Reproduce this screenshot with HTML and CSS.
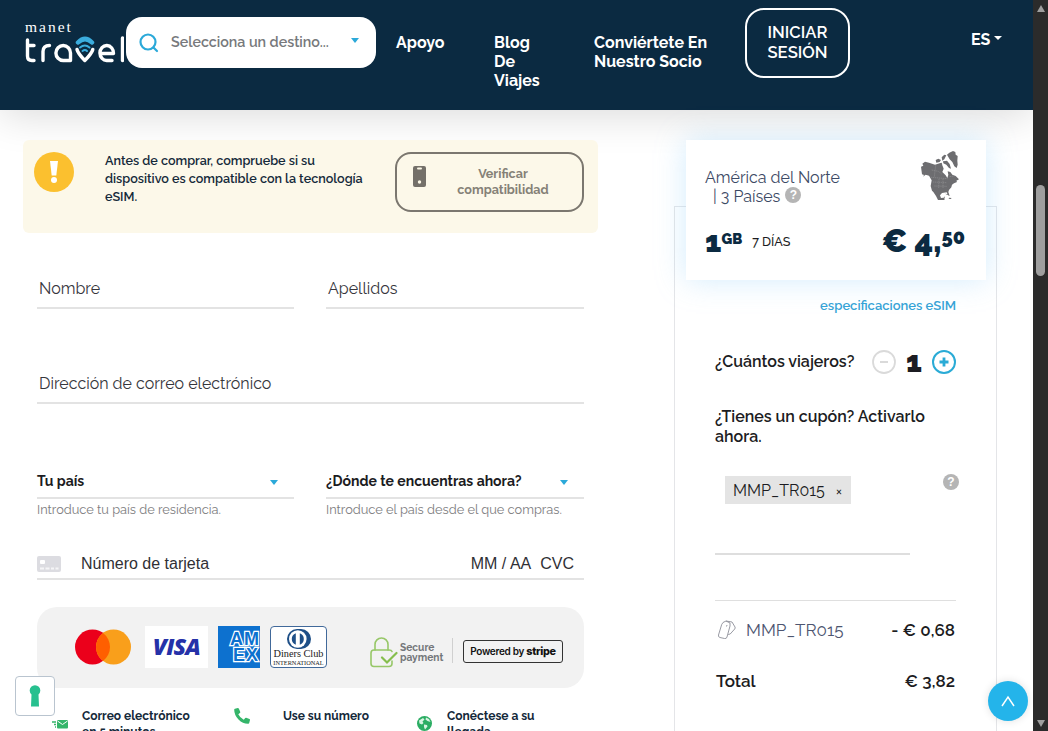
FILE: index.html
```html
<!DOCTYPE html>
<html lang="es">
     <head>
          <meta charset="UTF-8" />
          <meta
               name="viewport"
               content="width=device-width, initial-scale=1.0" />
          <title>Manet Travel</title>
          <link rel="stylesheet" href="styles.css">
     </head>
     <body>
          <div class="page">
               <header>
                    <a class="logo" href="#">
                         <span class="logo-top">manet</span>
                         <svg width="99" height="30" viewBox="0 0 99 30" fill="none" stroke="#fff" stroke-width="3.4" stroke-linecap="round" stroke-linejoin="round">
                              <path d="M2.5 5v16q0 4.500 4.500 4.500h2M2.500 10.500h6.500" />
                              <path d="M18 25.500v-9q0-6 6.500-6" />
                              <path d="M45.500 18a7.300 7.500 0 1 0-7.300 7.500h7.300z" />
                              <path d="M52 14.500q1 4 7.800 11q7-7 8-11" />
                              <path d="M76 18.500h12.500a6.800 7.500 0 1 0-6.500 7h5" />
                              <path d="M97.500 3v22.500" />
                              <g stroke="#3badde">
                                   <path d="M53 7.500q7-7 14 0" stroke-width="4.500" />
                                   <path d="M55 12.500q5-4 9.500 0M57.500 16q2.500-2 4.500 0" stroke-width="2" />
                              </g>
                         </svg>
                    </a>
                    <div class="search">
                         <svg width="20" height="20" viewBox="0 0 20 20" fill="none" stroke="#2ba9d9" stroke-width="2.200" stroke-linecap="round">
                              <circle cx="9" cy="9" r="7.500" />
                              <path d="M14.500 14.500l3.500 3.500" />
                         </svg>
                         <span>Selecciona un destino...</span>
                         <i class="caret"></i>
                    </div>
                    <nav>
                         <a class="nav-support" href="#">Apoyo</a>
                         <a class="nav-blog" href="#">Blog De Viajes</a>
                         <a class="nav-partner" href="#">Conviértete En Nuestro Socio</a>
                    </nav>
                    <a class="login" href="#">INICIAR SESIÓN</a>
                    <a class="lang" href="#">ES <i></i></a>
               </header>

               <main>
                    <section class="checkout">
                         <div class="alert">
                              <div class="alert-icon">
                                   <svg width="10" height="24" viewBox="0 0 10 24" fill="#fff">
                                        <path d="M1 1h8l-1.700 14.500h-4.600z" />
                                        <circle cx="5" cy="20" r="3" />
                                   </svg>
                              </div>
                              <p>Antes de comprar, compruebe si su dispositivo es compatible con la tecnología eSIM.</p>
                              <a class="verify" href="#">
                                   <svg width="13" height="21" viewBox="0 0 13 21">
                                        <rect width="13" height="21" rx="2" fill="#747069" />
                                        <rect x="4" y="1.500" width="5" height="2" rx="1" fill="#fcf8e8" />
                                        <circle cx="6.500" cy="16" r="1.700" fill="#fcf8e8" />
                                   </svg>
                                   <span>Verificar compatibilidad</span>
                              </a>
                         </div>

                         <form>
                              <div class="row names">
                                   <div class="field">Nombre</div>
                                   <div class="field">Apellidos</div>
                              </div>
                              <div class="field email">Dirección de correo electrónico</div>
                              <div class="row countries">
                                   <div>
                                        <div class="select">Tu país <i class="caret"></i></div>
                                        <small>Introduce tu país de residencia.</small>
                                   </div>
                                   <div>
                                        <div class="select">¿Dónde te encuentras ahora? <i class="caret"></i></div>
                                        <small>Introduce el país desde el que compras.</small>
                                   </div>
                              </div>
                              <div class="card-number">
                                   <svg width="24" height="16" viewBox="0 0 24 16">
                                        <rect width="24" height="16" rx="2" fill="#dcdce1" />
                                        <rect x="3" y="4" width="5" height="4" rx="1" fill="#fff" />
                                        <path d="M3 12.500h4M8.500 12.500h4M14 12.500h3M18.500 12.500h3" stroke="#f5f5f7" stroke-width="2" />
                                   </svg>
                                   <span class="number">Número de tarjeta</span>
                                   <span>MM / AA</span>
                                   <span class="cvc">CVC</span>
                              </div>
                         </form>

                         <div class="payments">
                              <svg class="mastercard" width="56" height="36" viewBox="0 0 56 36">
                                   <circle cx="17.500" cy="18" r="17.500" fill="#eb001b" />
                                   <circle cx="38.500" cy="18" r="17.500" fill="#f99f1b" />
                                   <path d="M28 4a17.500 17.500 0 0 1 0 28a17.500 17.500 0 0 1 0-28z" fill="#ff5f00" />
                              </svg>
                              <div class="visa">VISA</div>
                              <div class="amex"><span>AM</span><span>EX</span></div>
                              <div class="diners">
                                   <svg width="24" height="20" viewBox="0 0 24 20">
                                        <path d="M10 0h4a10 10 0 0 1 0 20h-4a10 10 0 0 1 0-20z" fill="#1e4f87" />
                                        <circle cx="10.800" cy="10" r="8.800" fill="#fff" />
                                        <path d="M8.800 4.200v11.600a6.200 6.200 0 0 1 0-11.600zM12.800 4.200v11.600a6.200 6.200 0 0 0 0-11.600z" fill="#1e4f87" />
                                   </svg>
                                   <span class="diners-name">Diners Club</span>
                                   <span class="diners-sub">INTERNATIONAL</span>
                              </div>
                              <div class="secure">
                                   <svg width="28" height="31" viewBox="0 0 28 31" fill="none" stroke="#97c768" stroke-width="1.600" stroke-linecap="round">
                                        <path d="M5 13v-5.500a6.500 6.500 0 0 1 13 0v5.500" />
                                        <path d="M22 24v2.500q0 3-3 3h-15q-3 0-3-3v-10.500q0-3 3-3h15q2.500 0 3 1.500" />
                                        <path d="M12 20.500l5 5l9.500-9.500" stroke-width="2.200" stroke="#85be4d" />
                                   </svg>
                                   <div>
                                        <span>Secure</span>
                                        <span>payment</span>
                                   </div>
                              </div>
                              <div class="stripe">Powered by <b>stripe</b></div>
                         </div>

                         <div class="features">
                              <div class="feature mail">
                                   <svg width="16" height="10" viewBox="0 0 16 10">
                                        <rect x="5" y="1" width="11" height="8.500" rx="1" fill="#35b56a" />
                                        <path d="M5.500 2l5 3.500l5-3.500" fill="none" stroke="#fff" />
                                        <path d="M0 3h4M2 5.500h2M3 8h1" stroke="#35b56a" stroke-width="1.400" />
                                   </svg>
                                   <span>Correo electrónico en 5 minutos</span>
                              </div>
                              <div class="feature phone">
                                   <svg width="16" height="16" viewBox="0 0 16 16" fill="#35b56a">
                                        <path d="M1 .7L3.800 0q.7 0 1 .6l1.400 3.200q.2.600-.3 1.100L4.300 6.200Q6 9.800 9.800 11.700l1.400-1.700q.500-.5 1-.3l3.300 1.400q.6.300.5 1l-.8 3q-.2.700-.9.700Q9 16 4.500 11.500Q.2 7 .2 1.700q0-.8.800-1z" />
                                   </svg>
                                   <span>Use su número</span>
                              </div>
                              <div class="feature globe">
                                   <svg width="15" height="15" viewBox="0 0 15 15">
                                        <circle cx="7.500" cy="7.500" r="7.500" fill="#2bad63" />
                                        <path d="M2 4.500l4-2.500l1.500 1.500l-2 2l1 1.500l-1.500 1.500l-2.500-1zM9 1.500l3 1.500l1.500 3l-3-1l-2-1.500zM7 8.500l3 .5l.5 1.500l-2.500 3l-1-2.500z" fill="#d8f3e2" />
                                   </svg>
                                   <span>Conéctese a su llegada</span>
                              </div>
                         </div>
                    </section>

                    <aside>
                         <div class="plan">
                              <div class="plan-head">
                                   <div class="plan-name">América del Norte<br><span>| 3 Países <b class="help">?</b></span></div>
                                   <svg width="38" height="50" viewBox="0 0 114 150" fill="#6d6d70">
                                        <path d="M0 50l7-3l-3-6l8-6l12 3l18 6l14-4l8 6l4 10l-4 10l10 10l5 8l3-10l-2-10l8 2l6 8l10 4l10 10l-8 4l2 4l-9 4l-6 4l-2 8l-7 8l-2 6l4 12l-5-2l-4-9l-14 2l-6 7l3 8l8-1l4-4l-2 9l4 7l8 4l-3 4l-12-6l-16-7l-6-12l-8-12l-4-4l-4-14l3-17l-8-14l-10-3l-8 6l3-5l-6-2z" />
                                        <path d="M78 14l7-6l11-5l7 3l1 8l6 4l-1 14l1 12l-3 10l-7-5l-6-13l-8-8z" />
                                        <path d="M44 30l8-4l8 4l-4 6l-10 2zM62 22l8-8l6 2l-6 12l-6 4zM66 34l12-2l8 10l4 14l-6-2l-8-10l-9-4zM56 40l6-2l2 6l-6 2zM84 143l8 1l-3 3l-6-1zM72 131l10 2l-2 2z" />
                                        <path d="M32 60l20 4l10 8M30 82l50 4M44 46l-4 34M54 86l-1 30M66 86v28M36 96l40 2M40 108l38 1M86 80l14-2" fill="none" stroke="#98989b" stroke-width="1.500" stroke-dasharray="4 2" />
                                   </svg>
                              </div>
                              <div class="plan-price">
                                   <div class="data">1<sup>GB</sup></div>
                                   <div class="days">7 DÍAS</div>
                                   <div class="price">€ 4,<sup>50</sup></div>
                              </div>
                         </div>

                         <a class="specs" href="#">especificaciones eSIM</a>

                         <div class="travellers">
                              <span>¿Cuántos viajeros?</span>
                              <svg width="24" height="24" viewBox="0 0 24 24" fill="none" stroke="#dadada">
                                   <circle cx="12" cy="12" r="11" stroke-width="1.800" />
                                   <path d="M8 12h8" stroke-width="2" />
                              </svg>
                              <b>1</b>
                              <svg width="24" height="24" viewBox="0 0 24 24" fill="none" stroke="#2aabd6">
                                   <circle cx="12" cy="12" r="11" stroke-width="2" />
                                   <path d="M7.500 12h9M12 7.500v9" stroke-width="2.800" />
                              </svg>
                         </div>

                         <p class="coupon-title">¿Tienes un cupón? Activarlo ahora.</p>
                         <div class="coupon">
                              <div class="tag">MMP_TR015 <i>×</i></div>
                              <b class="help">?</b>
                         </div>

                         <div class="totals">
                              <div class="line discount">
                                   <svg width="20" height="20" viewBox="0 0 20 20" fill="none" stroke="#8d8f99" stroke-width=".9">
                                        <path d="M6 2.500l3-1.500l4 2v3l-3 11q-.5 2-2.500 1.500l-4.500-1q-2-.5-1.500-2.500l3.200-10.500z" />
                                        <path d="M9 1l6 1l3 5q.5 1-.3 2l-4.500 5l-2 .5M10 5l-.5 1.500" />
                                   </svg>
                                   <span>MMP_TR015</span>
                                   <b>- € 0,68</b>
                              </div>
                              <div class="line total"><span>Total</span><b>€ 3,82</b></div>
                         </div>
                    </aside>
               </main>
          </div>

          <div class="scrollbar">
               <i class="arrow-up"></i>
               <i class="thumb"></i>
               <i class="arrow-down"></i>
          </div>

          <a class="privacy" href="#">
               <svg width="12" height="22" viewBox="0 0 12 22" fill="#27c08f">
                    <path d="M2.500 9.500a5.300 5.300 0 1 1 7 0l.5 12h-8z" />
               </svg>
          </a>
          <a class="to-top" href="#">
               <svg width="14" height="12" viewBox="0 0 14 12" fill="none" stroke="#fff" stroke-width="1.500">
                    <path d="M1 11l6-9l6 9" />
               </svg>
          </a>
     </body>
</html>
```
FILE: styles.css
```css
* {
     padding: 0;
     margin: 0;
     box-sizing: border-box;
}
body {
     display: flex;
     height: 731px;
     overflow: hidden;
     background-color: #fff;
     font-family: Raleway, Lato, sans-serif;
     color: #1c1c22;
}
a {
     text-decoration: none;
     color: inherit;
}
svg {
     display: block;
     flex: none;
}
.page {
     width: 1033px;
     height: 731px;
     overflow: hidden;
}

/* header */
header {
     display: flex;
     align-items: flex-start;
     height: 110px;
     padding-left: 25px;
     background-color: #0b2a41;
     color: #fff;
     box-shadow: 0 5px 40px rgba(0, 0, 0, 0.15);
}
.logo {
     width: 101px;
     padding-top: 19px;
}
.logo-top {
     display: block;
     font: 15.5px/16px "Liberation Serif", serif;
     letter-spacing: 2px;
}
.search {
     display: flex;
     align-items: center;
     width: 250px;
     height: 51px;
     margin-top: 17px;
     padding: 0 17px 0 13px;
     background-color: #fff;
     border-radius: 16px;
     color: #77797c;
     font-size: 14.25px;
     font-weight: 600;
}
.search span {
     flex: 1;
     margin-left: 12px;
     padding-bottom: 2px;
}
.caret {
     border: 4.5px solid transparent;
     border-top: 5px solid #2ba9d9;
     border-bottom: 0;
}
.search .caret {
     margin-bottom: 4px;
}
nav {
     display: flex;
     padding: 33px 0 0 20px;
     font-size: 16px;
     font-weight: 700;
     line-height: 19px;
}
.nav-support {
     width: 98px;
}
.nav-blog {
     width: 50px;
     margin-right: 50px;
}
.nav-partner {
     width: 120px;
}
.login {
     width: 105px;
     height: 70px;
     margin: 8px 0 0 31px;
     padding: 12px 16px 0;
     border: 2px solid #fff;
     border-radius: 19px;
     font-size: 16.6px;
     font-weight: 600;
     line-height: 20px;
     text-align: center;
}
.lang {
     display: flex;
     align-items: center;
     margin: 30px 0 0 121px;
     font-size: 16px;
     font-weight: 700;
     line-height: 20px;
}
.lang i {
     margin: -4px 0 0 4px;
     border: 4px solid transparent;
     border-top-color: #fff;
     border-bottom: 0;
}

main {
     display: flex;
     justify-content: space-between;
     padding: 30px 36px 0 23px;
}
.checkout {
     width: 575px;
}

/* compatibility notice */
.alert {
     display: flex;
     align-items: flex-start;
     height: 93px;
     padding: 12px 14px 0 11px;
     background-color: #fcf8e9;
     border-radius: 6px;
     font-size: 12.6px;
     font-weight: 700;
}
.alert-icon {
     display: flex;
     flex: none;
     align-items: center;
     justify-content: center;
     width: 40px;
     height: 40px;
     background-color: #fbc02f;
     border-radius: 50%;
}
.alert p {
     flex: 1;
     margin: 0 20px 0 31px;
     color: #14293a;
     font-weight: 600;
     line-height: 18px;
}
.verify {
     display: flex;
     flex: none;
     width: 189px;
     height: 60px;
     padding: 12px 0 0 16px;
     border: 2px solid #7b776f;
     border-radius: 16px;
     color: #858177;
     line-height: 16px;
     text-align: center;
}
.verify span {
     width: 100px;
     margin-left: 27px;
}

/* form */
form {
     width: 547px;
     margin-left: 14px;
}
.row {
     display: grid;
     grid-template-columns: 257px 258px;
     justify-content: space-between;
}
.field {
     height: 34px;
     padding: 4px 2px 0;
     border-bottom: 2px solid #e3e3e3;
     color: #36363c;
     font-size: 16px;
     line-height: 20px;
}
.names {
     padding-top: 42px;
}
.email {
     margin-top: 61px;
}
.countries {
     padding-top: 66px;
}
.select {
     display: flex;
     align-items: center;
     justify-content: space-between;
     height: 29px;
     padding: 0 16px 5px 0;
     border-bottom: 2px solid #e3e3e3;
     font-size: 14px;
     font-weight: 700;
     line-height: 18px;
}
.select .caret {
     margin-top: 3px;
}
small {
     display: block;
     padding-top: 3px;
     color: #7d7d80;
     font-size: 12.8px;
     line-height: 16px;
}
.card-number {
     display: flex;
     align-items: center;
     height: 31px;
     margin-top: 31px;
     border-bottom: 2px solid #e3e3e3;
     padding-right: 10px;
     color: #303035;
     font: 16px "Liberation Sans", Arial, sans-serif;
}
.number {
     flex: 1;
     margin-left: 20px;
}
.cvc {
     margin-left: 9px;
}

/* payment logos */
.payments {
     display: flex;
     align-items: center;
     width: 547px;
     height: 81px;
     margin: 27px 0 0 14px;
     padding: 0 0 2px 38px;
     background-color: #f2f2f2;
     border-radius: 20px;
}
.visa {
     width: 63px;
     height: 42px;
     margin-left: 14px;
     background-color: #fff;
     color: #2531a8;
     font: italic 800 23px/40px "Open Sans", sans-serif;
     letter-spacing: -0.8px;
     text-align: center;
}
.amex {
     width: 42px;
     height: 42px;
     margin-left: 10px;
     padding: 5px 0 0 12px;
     overflow: hidden;
     background-color: #0d71cf;
     color: #0d71cf;
     font: 700 18px/16px "Liberation Sans", sans-serif;
     letter-spacing: 1px;
     -webkit-text-stroke: 2.4px #fff;
     paint-order: stroke fill;
}
.amex span {
     display: block;
}
.amex span + span {
     padding-left: 3px;
}
.diners {
     display: flex;
     flex-direction: column;
     align-items: center;
     width: 57px;
     height: 42px;
     margin-left: 10px;
     padding-top: 2px;
     background-color: #fff;
     border: 1px solid #41699a;
     border-radius: 4px;
     color: #222;
     font-family: "Liberation Serif", serif;
     white-space: nowrap;
}
.diners-name {
     font-size: 10.3px;
     line-height: 10px;
}
.diners-sub {
     font-size: 6.3px;
     line-height: 7px;
}
.secure {
     display: flex;
     margin: 11px 0 0 43px;
     color: #74777a;
     font-size: 10.2px;
     font-weight: 700;
     line-height: 10px;
}
.secure div {
     width: 53px;
     height: 25px;
     margin: 1px 0 0 2px;
     padding-top: 4px;
     border-right: 1px solid #d0d0d0;
}
.secure span {
     display: block;
}
.stripe {
     width: 100px;
     height: 23px;
     margin: 10px 0 0 10px;
     border: 1px solid #333;
     border-radius: 3px;
     color: #111;
     font: 600 10px/21px Inter, sans-serif;
     letter-spacing: -0.3px;
     text-align: center;
     white-space: nowrap;
}
.stripe b {
     font-size: 10.8px;
     font-weight: 800;
}

.features {
     display: flex;
     margin-top: 20px;
     color: #14293a;
     font-size: 12px;
     font-weight: 700;
     line-height: 16px;
}
.feature {
     display: flex;
     align-items: flex-start;
}
.mail {
     width: 180px;
     padding-left: 29px;
}
.mail svg {
     margin: 11px 14px 0 0;
}
.phone {
     width: 207px;
     padding-left: 31px;
}
.phone svg {
     margin: 0 33px 0 0;
}
.globe {
     width: 140px;
     padding-left: 7px;
}
.globe svg {
     margin: 8px 15px 0 0;
}

/* order summary */
aside {
     width: 323px;
     height: 700px;
     margin-top: 66px;
     border: 1px solid #e4e5e8;
}
.plan {
     width: 300px;
     height: 140px;
     margin: -67px 0 0 11px;
     padding: 10px 20px 0 19px;
     background-color: #fff;
     box-shadow: 0 0 28px rgba(140, 205, 250, 0.38);
}
.plan-head {
     display: flex;
     justify-content: space-between;
     height: 73px;
     padding-right: 7px;
}
.plan-name {
     padding-top: 18px;
     color: #3c4964;
     font-size: 16px;
     line-height: 19px;
     white-space: nowrap;
}
.plan-name span {
     display: flex;
     align-items: center;
     margin-left: 8px;
}
.help {
     display: flex;
     align-items: center;
     justify-content: center;
     width: 16px;
     height: 16px;
     background-color: #b5b5b5;
     border-radius: 50%;
     color: #fff;
     font: 700 12px "Liberation Sans", sans-serif;
}
.plan-name .help {
     margin: -3px 0 0 5px;
}
.plan-price {
     display: flex;
     align-items: baseline;
     height: 40px;
     color: #0b2a41;
     line-height: 36px;
}
.plan-price sup {
     vertical-align: 8px;
     line-height: 1;
}
.data {
     font-size: 30px;
     font-weight: 900;
}
.data sup {
     font-size: 14.5px;
}
.days {
     flex: 1;
     align-self: flex-start;
     margin-left: 10px;
     padding-top: 1px;
     color: #1c1c22;
     font-size: 12.6px;
     font-weight: 500;
}
.price {
     margin-right: 1px;
     font-size: 32px;
     font-weight: 900;
}
.price sup {
     font-size: 20px;
}
.specs {
     display: block;
     margin: 17px 40px 0 0;
     color: #36a3d6;
     font-size: 13px;
     font-weight: 600;
     line-height: 18px;
     text-align: right;
}
.travellers {
     display: flex;
     align-items: center;
     height: 30px;
     margin: 32px 40px 0;
     font-size: 16px;
     font-weight: 600;
}
.travellers span {
     width: 157px;
     padding-bottom: 2px;
     white-space: nowrap;
}
.travellers b {
     width: 36px;
     padding-bottom: 1px;
     font-size: 29px;
     font-weight: 900;
     text-align: center;
}
.coupon-title {
     width: 225px;
     margin: 30px 0 0 40px;
     font-size: 16px;
     font-weight: 600;
     line-height: 20px;
}
.coupon {
     display: flex;
     justify-content: space-between;
     height: 77px;
     margin: 29px 37px 0 50px;
}
.coupon .help {
     margin-top: -2px;
}
.tag {
     width: 126px;
     height: 28px;
     padding-left: 8px;
     background-color: #e4e4e4;
     font-size: 16px;
     line-height: 30px;
}
.tag i {
     margin-left: 7px;
     font-size: 14px;
     font-style: normal;
}
.totals {
     margin: 0 40px;
     font-size: 17px;
}
.totals::before {
     content: "";
     display: block;
     width: 195px;
     height: 45px;
     margin-bottom: 2px;
     border-top: 2px solid #dedede;
     margin-bottom: 0;
}
.line {
     display: flex;
     align-items: center;
     justify-content: space-between;
     line-height: 20px;
}
.line b {
     padding-right: 1px;
     font-weight: 600;
}
.discount {
     height: 59px;
     border-top: 1px solid #dfdfdf;
}
.discount svg {
     margin-left: 2px;
}
.discount span {
     flex: 1;
     margin-left: 9px;
     color: #4d5570;
     font-weight: 400;
}
.total {
     padding: 12px 0 0 1px;
     font-weight: 600;
}

/* browser scrollbar */
.scrollbar {
     display: flex;
     flex-direction: column;
     align-items: center;
     width: 15px;
     height: 731px;
     padding: 5px 0 4px;
     background-color: #2b2b2b;
}
.arrow-up {
     border: 4.5px solid transparent;
     border-top: 0;
     border-bottom: 7px solid #9f9f9f;
}
.thumb {
     width: 9px;
     height: 91px;
     margin: 173px 0 auto;
     background-color: #9f9f9f;
     border-radius: 5px;
}
.arrow-down {
     border: 4.5px solid transparent;
     border-top: 7px solid #9f9f9f;
     border-bottom: 0;
}

/* floating buttons */
.privacy {
     position: absolute;
     left: 15px;
     top: 676px;
     display: flex;
     align-items: center;
     justify-content: center;
     width: 40px;
     height: 40px;
     background-color: #fff;
     border: 1px solid #b9c4cf;
     border-radius: 4px;
}
.to-top {
     position: absolute;
     left: 988px;
     top: 681px;
     display: flex;
     align-items: center;
     justify-content: center;
     width: 40px;
     height: 40px;
     background-color: #24b4ea;
     border-radius: 50%;
     box-shadow: 0 0 8px rgba(0, 0, 0, 0.12);
}
```
